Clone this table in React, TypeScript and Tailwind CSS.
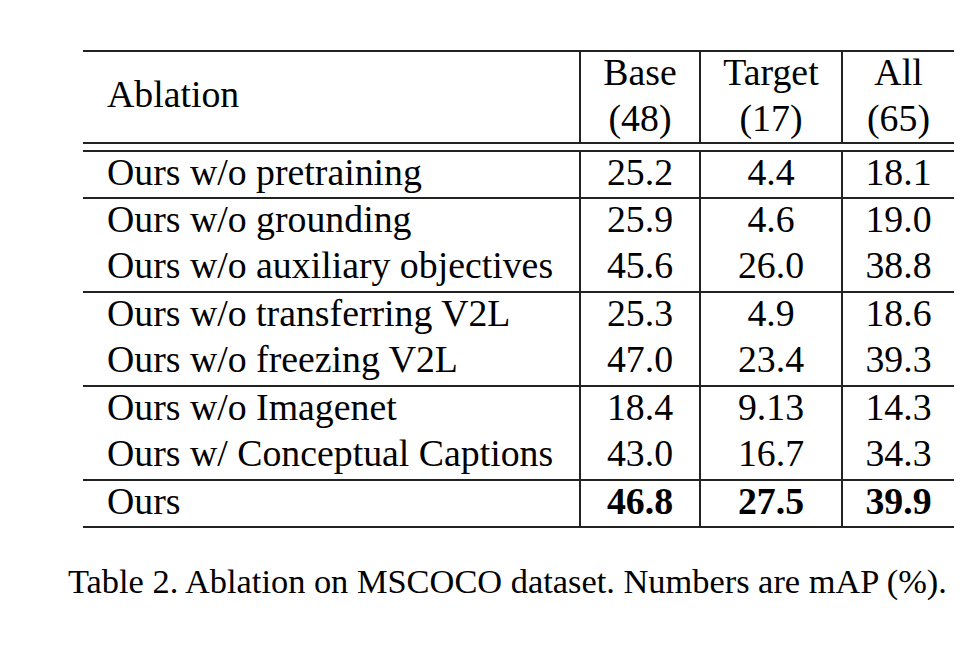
import React from 'react';

// ablation table, LaTeX look

type Row = { name: string; base: string; target: string; all: string; bold?: boolean };

const groups: Row[][] = [
  [{ name: 'Ours w/o pretraining', base: '25.2', target: '4.4', all: '18.1' }],
  [
    { name: 'Ours w/o grounding', base: '25.9', target: '4.6', all: '19.0' },
    { name: 'Ours w/o auxiliary objectives', base: '45.6', target: '26.0', all: '38.8' },
  ],
  [
    { name: 'Ours w/o transferring V2L', base: '25.3', target: '4.9', all: '18.6' },
    { name: 'Ours w/o freezing V2L', base: '47.0', target: '23.4', all: '39.3' },
  ],
  [
    { name: 'Ours w/o Imagenet', base: '18.4', target: '9.13', all: '14.3' },
    { name: 'Ours w/ Conceptual Captions', base: '43.0', target: '16.7', all: '34.3' },
  ],
  [{ name: 'Ours', base: '46.8', target: '27.5', all: '39.9', bold: true }],
];

const cols = 'grid grid-cols-[496px_120px_142px_113px]';
const cell = 'border-l-2 border-[#222] text-center';

const TableRow: React.FC<{ row: Row; h: string }> = ({ row, h }) => (
  <div className={`${cols} ${h} leading-[40px]`}>
    <div className="pl-[24px] whitespace-nowrap">{row.name}</div>
    <div className={`${cell} ${row.bold ? 'font-bold' : ''}`}>{row.base}</div>
    <div className={`${cell} ${row.bold ? 'font-bold' : ''}`}>{row.target}</div>
    <div className={`${cell} ${row.bold ? 'font-bold' : ''}`}>{row.all}</div>
  </div>
);

export default function App() {
  return (
    <div className="w-[972px] h-[648px] bg-white text-black font-['Liberation_Serif','Times_New_Roman',serif] overflow-hidden">
      <div className="pt-[50px] pl-[83px]">
        <div className="w-[871px] text-[37.8px]">
          {/* header */}
          <div className={`${cols} border-t-2 border-b-2 border-[#222] h-[94px]`}>
            <div className="pl-[24px] leading-[84px]">Ablation</div>
            {[
              ['Base', '(48)'],
              ['Target', '(17)'],
              ['All', '(65)'],
            ].map(([a, b]) => (
              <div key={a} className={cell}>
                <div className="h-[46px] leading-[40px]">{a}</div>
                <div className="h-[44px] leading-[40px]">{b}</div>
              </div>
            ))}
          </div>
          <div className="h-[8px] border-b-2 border-[#222]" />
          {groups.map((g, i) => (
            <div key={i} className="border-b-2 border-[#222]">
              {g.map((r) =>
                <TableRow key={r.name} row={r} h={g.length === 1 ? 'h-[45px]' : 'h-[46px]'} />
              )}
            </div>
          ))}
        </div>
      </div>
      <div className="mt-[33px] pl-[68px] text-[34.4px] leading-[40px] whitespace-nowrap">
        Table 2. Ablation on MSCOCO dataset. Numbers are mAP (%).
      </div>
    </div>
  );
}
